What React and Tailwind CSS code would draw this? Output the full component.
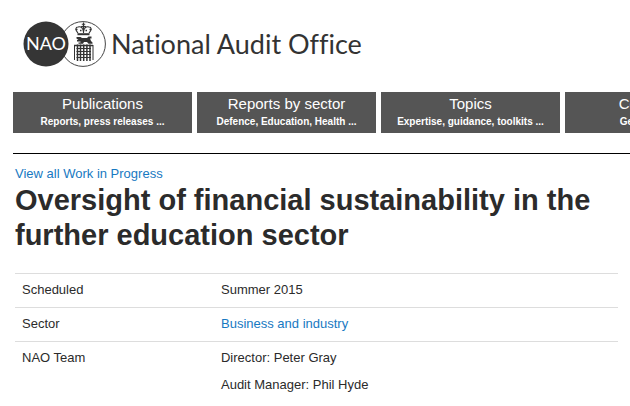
import React from 'react';

const navItems = [
  { title: 'Publications', text: 'Reports, press releases ...' },
  { title: 'Reports by sector', text: 'Defence, Education, Health ...' },
  { title: 'Topics', text: 'Expertise, guidance, toolkits ...' },
  { title: 'Contact us', text: 'Get in touch ...' },
];

function Logo() {
  return (
    <svg width="84" height="46" viewBox="0 0 84 46" aria-hidden="true">
      <circle cx="60" cy="23" r="22.4" fill="#fff" stroke="#444" strokeWidth="1" />
      <circle cx="23" cy="23" r="22.5" fill="#353535" />
      <text x="23" y="29" textAnchor="middle" fill="#fff" fontSize="18" fontFamily="Lato, sans-serif">NAO</text>
      {/* Crown */}
      <g fill="none" stroke="#333" strokeWidth="1.1">
        <path d="M60.500 1.500v4M58.800 3.200h3.400" />
        <path d="M55 12c-3-3-2.500-6 0-6 3-1 5 1 5.500 5 .5-4 2.500-6 5.500-5 2.500 0 3 3 0 6M57.500 6.500c1-1.500 5-1.500 6 0M60.500 5v7" />
        <path d="M54.500 13.200h12" strokeWidth="2" />
        <path d="M52.500 8.500h2M66.500 8.500h2M57 9.500h1.500M62.500 9.500h1.500" strokeWidth="1.500" />
      </g>
      {/* Lion */}
      <path d="M53.500 16h4l1.500 1h5l1.500-1.500h3v2h-1.500l1 2.500 1.500 1.500v1.200h-4l-1.500-1.700h-3l-1 1.700h-4.500v-1.200h2v-1h-3.500v-1.500h1.500l-2-1.500z" fill="#333" />
      {/* Portcullis */}
      <g fill="none" stroke="#333">
        <path d="M51 24.500h19" strokeWidth="1.500" />
        <path d="M51.500 24v15M70 24v15" strokeWidth="1" />
        <path d="M54.500 23.500v16.500M57.500 23.500v16.500M60.700 23.500v16.500M63.900 23.500v16.500M67 23.500v16.500" strokeWidth="1.500" />
        <path d="M53.500 27.500h14.500M53.500 30.500h14.500M53.500 33.500h14.500M53.500 36.500h14.500" strokeWidth="1.100" />
      </g>
    </svg>
  );
}

function Row({ label, children }) {
  return (
    <tr className="border-t border-[#ddd] align-top">
      <th scope="row" className="w-[33%] px-[7px] pt-[7px] pb-[9px] text-left font-normal">{label}</th>
      <td className="px-[7px] pt-[7px] pb-[9px]">{children}</td>
    </tr>
  );
}

function App() {
  return (
    <div className="min-h-screen overflow-hidden bg-white pl-[13px] font-['Liberation_Sans',Arial,sans-serif] text-[13px] leading-[17px] text-[#2b2b2b]">
      <header>
        <a href="#home" className="flex items-center gap-1 pt-[21px] pl-[10px]">
          <Logo />
          <span className="whitespace-nowrap font-[Lato,sans-serif] text-[27px] leading-[46px] text-[#333] [font-variant-ligatures:none]">National Audit Office</span>
        </a>

        <nav className="mt-[25px] flex gap-[5px]">
          {navItems.map((item) => (
            <a
              key={item.title}
              href="#menu"
              className="flex h-[41px] w-[179px] shrink-0 flex-col items-center whitespace-nowrap bg-[#555] pt-[3px] text-white"
            >
              <span className="text-[15px] leading-[18px]">{item.title}</span>
              <span className="text-[10px] leading-[18px] font-bold">{item.text}</span>
            </a>
          ))}
        </nav>
      </header>

      <main className="mt-5 border-t border-black pt-[11px]">
        <div className="mr-3 ml-[2px]">
          <a href="#work-in-progress" className="block text-[#1779c2]">View all Work in Progress</a>
          <h1 className="mt-px text-[29px] leading-[35px] font-bold">Oversight of financial sustainability in the further education sector</h1>

          <table className="mt-5 w-full border-collapse">
            <tbody>
              <Row label="Scheduled">Summer 2015</Row>
              <Row label="Sector">
                <a href="#sector" className="text-[#1779c2]">Business and industry</a>
              </Row>
              <Row label="NAO Team">
                <p>Director: Peter Gray</p>
                <p className="mt-[10px]">Audit Manager: Phil Hyde</p>
              </Row>
            </tbody>
          </table>
        </div>
      </main>
    </div>
  );
}

export default App;
